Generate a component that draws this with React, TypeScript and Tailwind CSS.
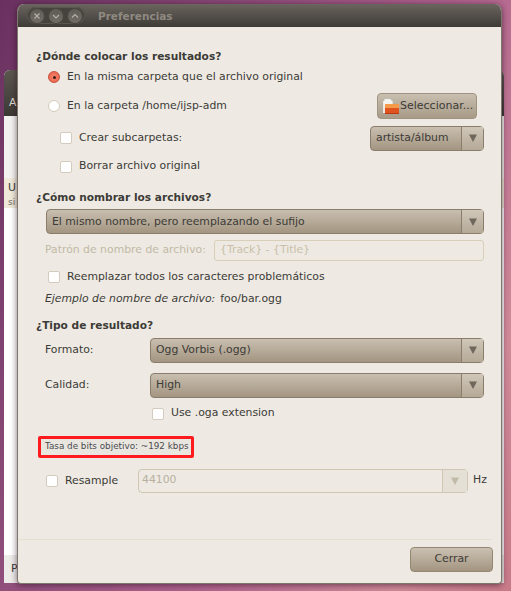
import type { ReactNode } from 'react'

const font = 'font-["DejaVu_Sans",sans-serif]'

function Arrow({ off }: { off?: boolean }) {
  return (
    <svg width="8" height="8" viewBox="0 0 8 8">
      <path d="M0 0.5h8L4 8z" fill={off ? '#c2baa8' : '#6f675b'} />
    </svg>
  )
}

function Combo({ label, className = '' }: { label: string; className?: string }) {
  return (
    <div className={`flex h-[25px] items-stretch rounded-[4px] border border-[#8a7d6b] bg-gradient-to-b from-[#c9bfb0] to-[#a39581] text-[#3c3b37] ${className}`}>
      <div className="flex flex-1 items-center pl-[5px] pt-px">{label}</div>
      <div className="flex w-[22px] items-center justify-center border-l border-[#8a7d6b] bg-gradient-to-b from-[#d0c7b9] to-[#b5a997]">
        <Arrow />
      </div>
    </div>
  )
}

function Check({ children, className = '' }: { children: ReactNode; className?: string }) {
  return (
    <div className={`flex items-center gap-[7px] ${className}`}>
      <div className="h-[12px] w-[12px] rounded-[2px] border border-[#d3cbbd] bg-white" />
      <span>{children}</span>
    </div>
  )
}

function FolderIcon() {
  return (
    <svg width="16" height="16" viewBox="0 0 16 16" className="mr-px shrink-0">
      <path d="M1 0.5h6l3 3v4H1z" fill="#f4f3f0" stroke="#b9b6ae" strokeWidth="0.8" />
      <path d="M1 3v12" stroke="#fff" strokeWidth="1.5" />
      <path d="M2 6h14v10H2z" fill="#e0531f" />
      <path d="M2 6h14v4H2z" fill="#f49a4a" />
      <path d="M2 15h14v1H2z" fill="#b93a12" />
    </svg>
  )
}

function WinButton({ d }: { d: string }) {
  return (
    <div className="flex h-[14px] w-[14px] items-center justify-center rounded-full bg-gradient-to-b from-[#5f5b55] to-[#716c66] shadow-[0_0_0_1px_#4a4641]">
      <svg width="8" height="8" viewBox="0 0 8 8">
        <path d={d} fill="none" stroke="#b4b0a9" strokeWidth="1.2" />
      </svg>
    </div>
  )
}

export default function App() {
  return (
    <div className={`relative h-[591px] w-[511px] overflow-hidden bg-[linear-gradient(115deg,#6a3160_0%,#8a4a78_30%,#b0648e_60%,#d08a98_85%,#c87a88_100%)] text-[10.85px] leading-none whitespace-nowrap text-[#3c3b37] ${font}`}>
      {/* window behind */}
      <div className="absolute left-[4px] top-[70px] flex h-[513px] w-[500px] flex-col overflow-hidden rounded-t-[6px] bg-white">
        <div className="flex h-[46px] items-end bg-gradient-to-b from-[#5c5650] to-[#3c3935] pb-[7px] pl-[5px] text-[#dfdbd2]">A</div>
        <div className="h-[62px] bg-[#f2f1ef]" />
        <div className="h-[30px] bg-[#eee9d8] pl-[4px] pt-[5px]">
          <div>U</div>
          <div className="mt-[4px] text-[9px] text-[#6f6b63]">si</div>
        </div>
        <div className="flex-1" />
        <div className="flex h-[28px] items-center bg-[#ecebe8] pl-[7px]">P</div>
      </div>

      {/* dialog */}
      <div className="absolute left-[17px] top-[4px] flex h-[580px] w-[485px] flex-col overflow-hidden rounded-t-[7px] rounded-b-[4px] border-x border-b border-[#7d786c] bg-[#eeeae3] shadow-[0_1px_6px_rgba(40,10,30,0.6)]">
        <div className="flex h-[23px] shrink-0 items-center bg-gradient-to-b from-[#6c655f] to-[#3e3b37] pl-[9px]">
          <div className="flex h-[17px] w-[58px] items-center justify-between rounded-full bg-[#46423e] px-[3px] shadow-[inset_0_0_0_1px_#5a5650]">
            <WinButton d="M1.5 1.5l5 5M6.5 1.5l-5 5" />
            <WinButton d="M1 3l3 3 3-3" />
            <WinButton d="M1 5.5l3-3 3 3" />
          </div>
          <span className="ml-[13px] pt-[2px] text-[10.5px] font-bold text-[#8f8a81]">Preferencias</span>
        </div>

        <div className="flex flex-1 flex-col pl-[18px] pr-[17px]">
          <div className="pt-[24px] text-[10.6px] font-bold">¿Dónde colocar los resultados?</div>

          <div className="mt-[9px] flex h-[13px] items-center gap-[7px] pl-[12px]">
            <div className="flex h-[12px] w-[12px] items-center justify-center rounded-full border border-[#c9503a] bg-[radial-gradient(circle,#f58a72,#e85a42)]">
              <div className="h-[3px] w-[3px] rounded-full bg-[#3c1f18]" />
            </div>
            <span>En la misma carpeta que el archivo original</span>
          </div>

          <div className="mt-[9px] flex h-[26px] items-center justify-between pl-[12px] pr-[7px]">
            <div className="flex items-center gap-[7px]">
              <div className="h-[12px] w-[12px] rounded-full border border-[#d3cbbd] bg-white" />
              <span className="pt-px">En la carpeta /home/ijsp-adm</span>
            </div>
            <div className="flex h-[26px] w-[100px] items-center rounded-[4px] border border-[#a09380] bg-gradient-to-b from-[#c9bfb0] to-[#a79a87] pl-[5px]">
              <FolderIcon />
              <span className="text-[11px] text-[#3c3b37]">Seleccionar...</span>
            </div>
          </div>

          <div className="mt-[7px] flex h-[25px] items-center justify-between pl-[24px]">
            <Check>Crear subcarpetas:</Check>
            <Combo label="artista/álbum" className="w-[114px]" />
          </div>

          <Check className="mt-[10px] h-[12px] pl-[24px]">Borrar archivo original</Check>

          <div className="mt-[19px] text-[10.6px] font-bold">¿Cómo nombrar los archivos?</div>

          <Combo label="El mismo nombre, pero reemplazando el sufijo" className="mt-[7px] ml-[10px]" />

          <div className="mt-[6px] flex h-[21px] items-center pl-[9px]">
            <span className="w-[169px] text-[#c2b9a6]">Patrón de nombre de archivo:</span>
            <div className="flex h-[21px] flex-1 items-center rounded-[3px] border border-[#d8cfb8] pl-[5px] text-[#c9bfa8]">{'{Track} - {Title}'}</div>
          </div>

          <Check className="mt-[10px] h-[12px] pl-[12px]">Reemplazar todos los caracteres problemáticos</Check>

          <div className="mt-[10px] flex h-[13px] items-center pl-[9px]">
            <span className="italic">Ejemplo de nombre de archivo:</span>
            <span className="ml-[5px]">foo/bar.ogg</span>
          </div>

          <div className="mt-[14px] text-[10.6px] font-bold">¿Tipo de resultado?</div>

          <div className="mt-[7px] flex h-[25px] items-center pl-[9px]">
            <span className="w-[105px]">Formato:</span>
            <Combo label="Ogg Vorbis (.ogg)" className="flex-1" />
          </div>
          <div className="mt-[10px] flex h-[25px] items-center pl-[9px]">
            <span className="w-[105px]">Calidad:</span>
            <Combo label="High" className="flex-1" />
          </div>

          <Check className="mt-[10px] h-[12px] pl-[116px]">Use .oga extension</Check>

          <div className="mt-[16px] ml-[2px] flex h-[22px] w-[156px] items-center rounded-[2px] border-[3px] border-[#ff1a20] bg-[#e9e6df] pl-[4px] text-[8.8px] text-[#4a4a50]">
            Tasa de bits objetivo: ~192 kbps
          </div>

          <div className="mt-[11px] flex h-[24px] items-center pl-[10px]">
            <Check className="w-[92px] shrink-0 pt-px">Resample</Check>
            <div className="flex h-[24px] w-[330px] shrink-0 items-stretch rounded-[4px] border border-[#cfc6b4]">
              <div className="flex flex-1 items-center pl-[3px] text-[#b8b09f]">44100</div>
              <div className="flex w-[25px] items-center justify-center border-l border-[#cfc6b4] bg-[#e5e0d6]">
                <Arrow off />
              </div>
            </div>
            <span className="ml-[5px] shrink-0">Hz</span>
          </div>

          <div className="mt-[46px] -mr-[8px] -ml-[18px] h-px bg-[#e5dfd0]" />

          <div className="mt-[7px] -mr-[9px] flex justify-end">
            <div className="flex h-[25px] w-[83px] items-center justify-center rounded-[4px] border border-[#948772] bg-gradient-to-b from-[#cbc1b2] to-[#a39581]">Cerrar</div>
          </div>
        </div>
      </div>
    </div>
  )
}
